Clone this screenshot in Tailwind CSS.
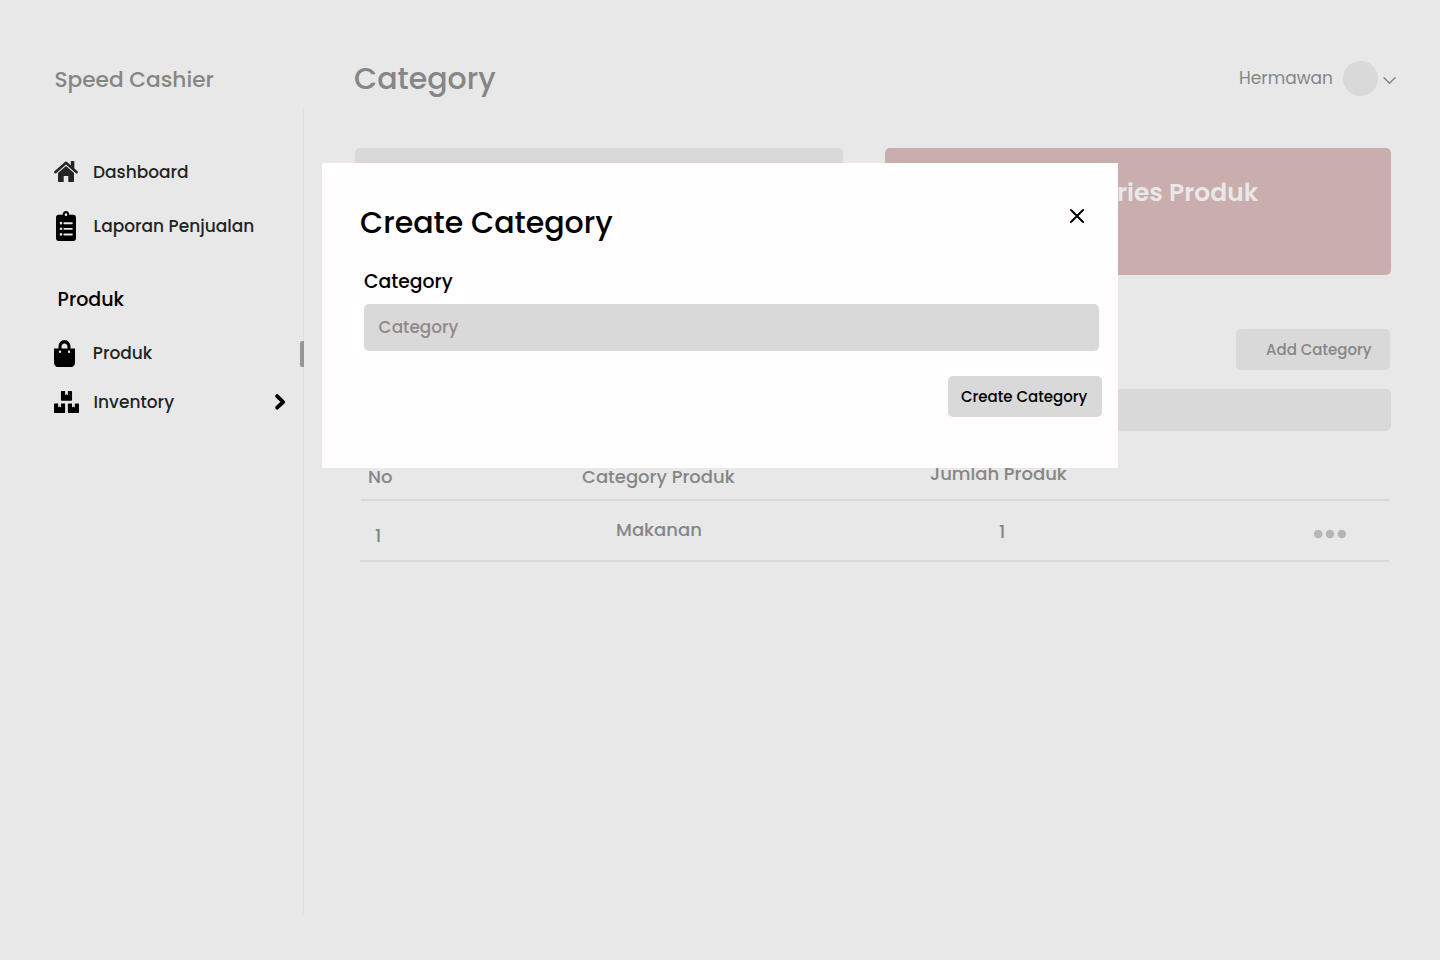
<!DOCTYPE html>
<html lang="id">
<head>
<meta charset="utf-8">
<title>Speed Cashier</title>
<script src="https://cdn.jsdelivr.net/npm/@tailwindcss/browser@4"></script>
</head>
<body class="relative flex h-[960px] w-[1440px] overflow-hidden bg-[#e8e8e8] font-[Poppins,Inter,sans-serif] font-medium text-[#868686]">

<!-- Sidebar -->
<aside class="flex w-[304px] shrink-0 flex-col">
  <div class="h-[108px] pt-[65px] pl-[54.4px] text-[21.7px] leading-[30px]">Speed Cashier</div>
  <nav class="flex h-[807px] flex-col border-r border-[#e0e0e0] pt-[49px] pl-[54px] text-[17px] text-[#222426]">
    <a class="flex h-[30px] items-center">
      <svg class="mb-px h-[21px] w-6 overflow-visible" viewBox="0 0 24 21" fill="currentColor"><path d="M1.300 11.200L12 1.700L22.700 11.200" fill="none" stroke="currentColor" stroke-width="2.500" stroke-linecap="round" stroke-linejoin="round"/><path d="M16.800 .6Q16.800 0 17.400 0H19.700Q20.300 0 20.300 .6V8.500L16.800 5.500Z"/><path d="M12 5L20 12V20.200Q20 21 19.200 21H14.900Q14.300 21 14.300 20.400V15H9.700V20.400Q9.700 21 9.100 21H4.800Q4 21 4 20.200V12Z"/></svg>
      <span class="mt-[2px] ml-[15px]">Dashboard</span>
    </a>
    <a class="mt-[25px] flex h-[30px] items-center">
      <svg class="mb-[2px] ml-[2px] h-[30px] w-5 shrink-0 text-black" viewBox="0 0 384 512" preserveAspectRatio="none" fill="currentColor"><path d="M336 64h-80c0-35.300-28.700-64-64-64s-64 28.700-64 64H48C21.500 64 0 85.500 0 112v352c0 26.500 21.500 48 48 48h288c26.500 0 48-21.500 48-48V112c0-26.500-21.500-48-48-48zM96 424c-13.300 0-24-10.700-24-24s10.700-24 24-24 24 10.700 24 24-10.700 24-24 24zm0-96c-13.300 0-24-10.700-24-24s10.700-24 24-24 24 10.700 24 24-10.700 24-24 24zm0-96c-13.300 0-24-10.700-24-24s10.700-24 24-24 24 10.700 24 24-10.700 24-24 24zm96-192c13.300 0 24 10.700 24 24s-10.700 24-24 24-24-10.700-24-24 10.700-24 24-24zm128 368c0 4.400-3.600 8-8 8H152c-4.400 0-8-3.600-8-8v-16c0-4.400 3.600-8 8-8h160c4.400 0 8 3.600 8 8v16zm0-96c0 4.400-3.600 8-8 8H152c-4.400 0-8-3.600-8-8v-16c0-4.400 3.600-8 8-8h160c4.400 0 8 3.600 8 8v16zm0-96c0 4.400-3.600 8-8 8H152c-4.400 0-8-3.600-8-8v-16c0-4.400 3.600-8 8-8h160c4.400 0 8 3.600 8 8v16z"/></svg>
      <span class="ml-[17.6px]">Laporan Penjualan</span>
    </a>
    <h2 class="mt-[44px] pl-[3.6px] text-[19px] leading-7 text-black">Produk</h2>
    <a class="mt-[26px] flex h-7 items-center">
      <svg class="mb-px h-[27px] w-[21px] text-black" viewBox="0 0 448 512" preserveAspectRatio="none" fill="currentColor"><path d="M352 160v-32C352 57.420 294.579 0 224 0 153.420 0 96 57.420 96 128v32H0v272c0 44.183 35.817 80 80 80h288c44.183 0 80-35.817 80-80V160h-96zm-192-32c0-35.290 28.710-64 64-64s64 28.710 64 64v32H160v-32zm160 120c-13.255 0-24-10.745-24-24s10.745-24 24-24 24 10.745 24 24-10.745 24-24 24zm-192 0c-13.255 0-24-10.745-24-24s10.745-24 24-24 24 10.745 24 24-10.745 24-24 24z"/></svg>
      <span class="ml-[17.8px]">Produk</span>
      <span class="-mr-px ml-auto h-[26px] w-1 rounded-l-[2px] bg-[#969696]"></span>
    </a>
    <a class="mt-[22px] flex h-6 items-center">
      <svg class="h-[22px] w-[25px] text-black" viewBox="0 0 576 512" preserveAspectRatio="none" fill="currentColor"><path d="M560 288h-80v96l-32-21.300-32 21.300v-96h-80c-8.800 0-16 7.200-16 16v192c0 8.800 7.200 16 16 16h224c8.800 0 16-7.200 16-16V304c0-8.800-7.200-16-16-16zm-384-64h224c8.800 0 16-7.200 16-16V16c0-8.800-7.200-16-16-16h-80v96l-32-21.300L256 96V0h-80c-8.800 0-16 7.200-16 16v192c0 8.800 7.200 16 16 16zm64 64h-80v96l-32-21.300L96 384v-96H16c-8.800 0-16 7.200-16 16v192c0 8.800 7.200 16 16 16h224c8.800 0 16-7.200 16-16V304c0-8.800-7.200-16-16-16z"/></svg>
      <span class="mt-[2px] ml-[14.6px]">Inventory</span>
      <svg class="mr-[17px] ml-auto h-4 w-[11px] overflow-visible text-black" viewBox="0 0 11 16" fill="none" stroke="currentColor" stroke-width="3.800" stroke-linecap="round" stroke-linejoin="round"><path d="M2.100 2.100L8.200 8L2.100 13.700"/></svg>
    </a>
  </nav>
</aside>

<!-- Page content -->
<main class="flex flex-1 flex-col pr-[49px] pl-[51px]">
  <header class="-mr-[6px] -ml-px flex h-[148px] items-start pt-[61px]">
    <h1 class="text-[30px] leading-9">Category</h1>
    <div class="ml-auto flex h-[35px] items-center">
      <span class="text-[17px] font-normal">Hermawan</span>
      <span class="ml-[10px] size-[35px] rounded-full bg-[#d9d9d9]"></span>
      <svg class="mt-1 ml-1 h-[9px] w-[15px]" viewBox="0 0 15 9" fill="none" stroke="currentColor" stroke-width="1.500" stroke-linecap="round" stroke-linejoin="round"><path d="M2 1.800L7.500 7.300L13 1.800"/></svg>
    </div>
  </header>

  <section class="flex h-[127px] justify-between">
    <div class="w-[488px] rounded-[5px] bg-[#d9d9d9]"></div>
    <div class="w-[506px] rounded-[5px] bg-[#caadad] pt-7 pl-[5px] text-center text-[25px] leading-[34px] font-semibold text-[#e8e8e8]">Categories Produk</div>
  </section>

  <button class="mt-[54px] mr-px h-[41px] w-[154px] self-end rounded-[5px] bg-[#d9d9d9] pt-[2px] pl-[30px] text-left text-[15px]">Add Category</button>
  <div class="mt-[19px] h-[42px] rounded-[5px] bg-[#d9d9d9]"></div>

  <!-- Category table -->
  <div class="mr-px ml-[6px] flex h-[70px] border-b-2 border-[#dcd8d9] pt-[30px] text-[18px] leading-7">
    <div class="w-[221px] pt-[2px] pl-[7px]">No</div>
    <div class="w-[348px] pt-[2px]">Category Produk</div>
    <div class="-mt-px">Jumlah Produk</div>
  </div>
  <div class="mr-[2px] ml-[5px] flex h-[61px] border-b-2 border-[#dcd8d9] text-[18px] leading-7">
    <div class="w-[256px] pt-[21px] pl-[15px]">1</div>
    <div class="w-[383px] pt-[15px]">Makanan</div>
    <div class="pt-[17px]">1</div>
    <svg class="mt-[28px] mr-[42px] ml-auto h-[10px] w-[34px]" viewBox="0 0 34 10" fill="#b9b4b5"><circle cx="5.200" cy="5" r="4.300"/><circle cx="17" cy="5" r="4.300"/><circle cx="28.800" cy="5" r="4.300"/></svg>
  </div>
</main>

<!-- Create category dialog -->
<div class="absolute top-[163px] left-[322px] flex h-[305px] w-[796px] flex-col bg-[#fffdfe] pr-4 pl-[38px] text-black">
  <div class="flex items-start justify-between pr-[17px]">
    <h2 class="mt-[42px] text-[30px] leading-9">Create Category</h2>
    <svg class="mt-[45px] size-4" viewBox="0 0 16 16" fill="none" stroke="black" stroke-width="2" stroke-linecap="round"><path d="M2 2L14 14M14 2L2 14"/></svg>
  </div>
  <label class="mt-[27px] ml-1 text-[18.8px] leading-7">Category</label>
  <div class="mt-[7.5px] mr-[3px] ml-1 h-[47.5px] rounded-[5px] bg-[#d9d9d9] pl-[14.6px] text-[16.9px] leading-[47px] text-[#918888]">Category</div>
  <button class="mt-[25px] h-[41px] w-[154px] self-end rounded-[5px] bg-[#d9d9d9] pt-[2px] pl-[13px] text-left text-[15px]">Create Category</button>
</div>
</body>
</html>
